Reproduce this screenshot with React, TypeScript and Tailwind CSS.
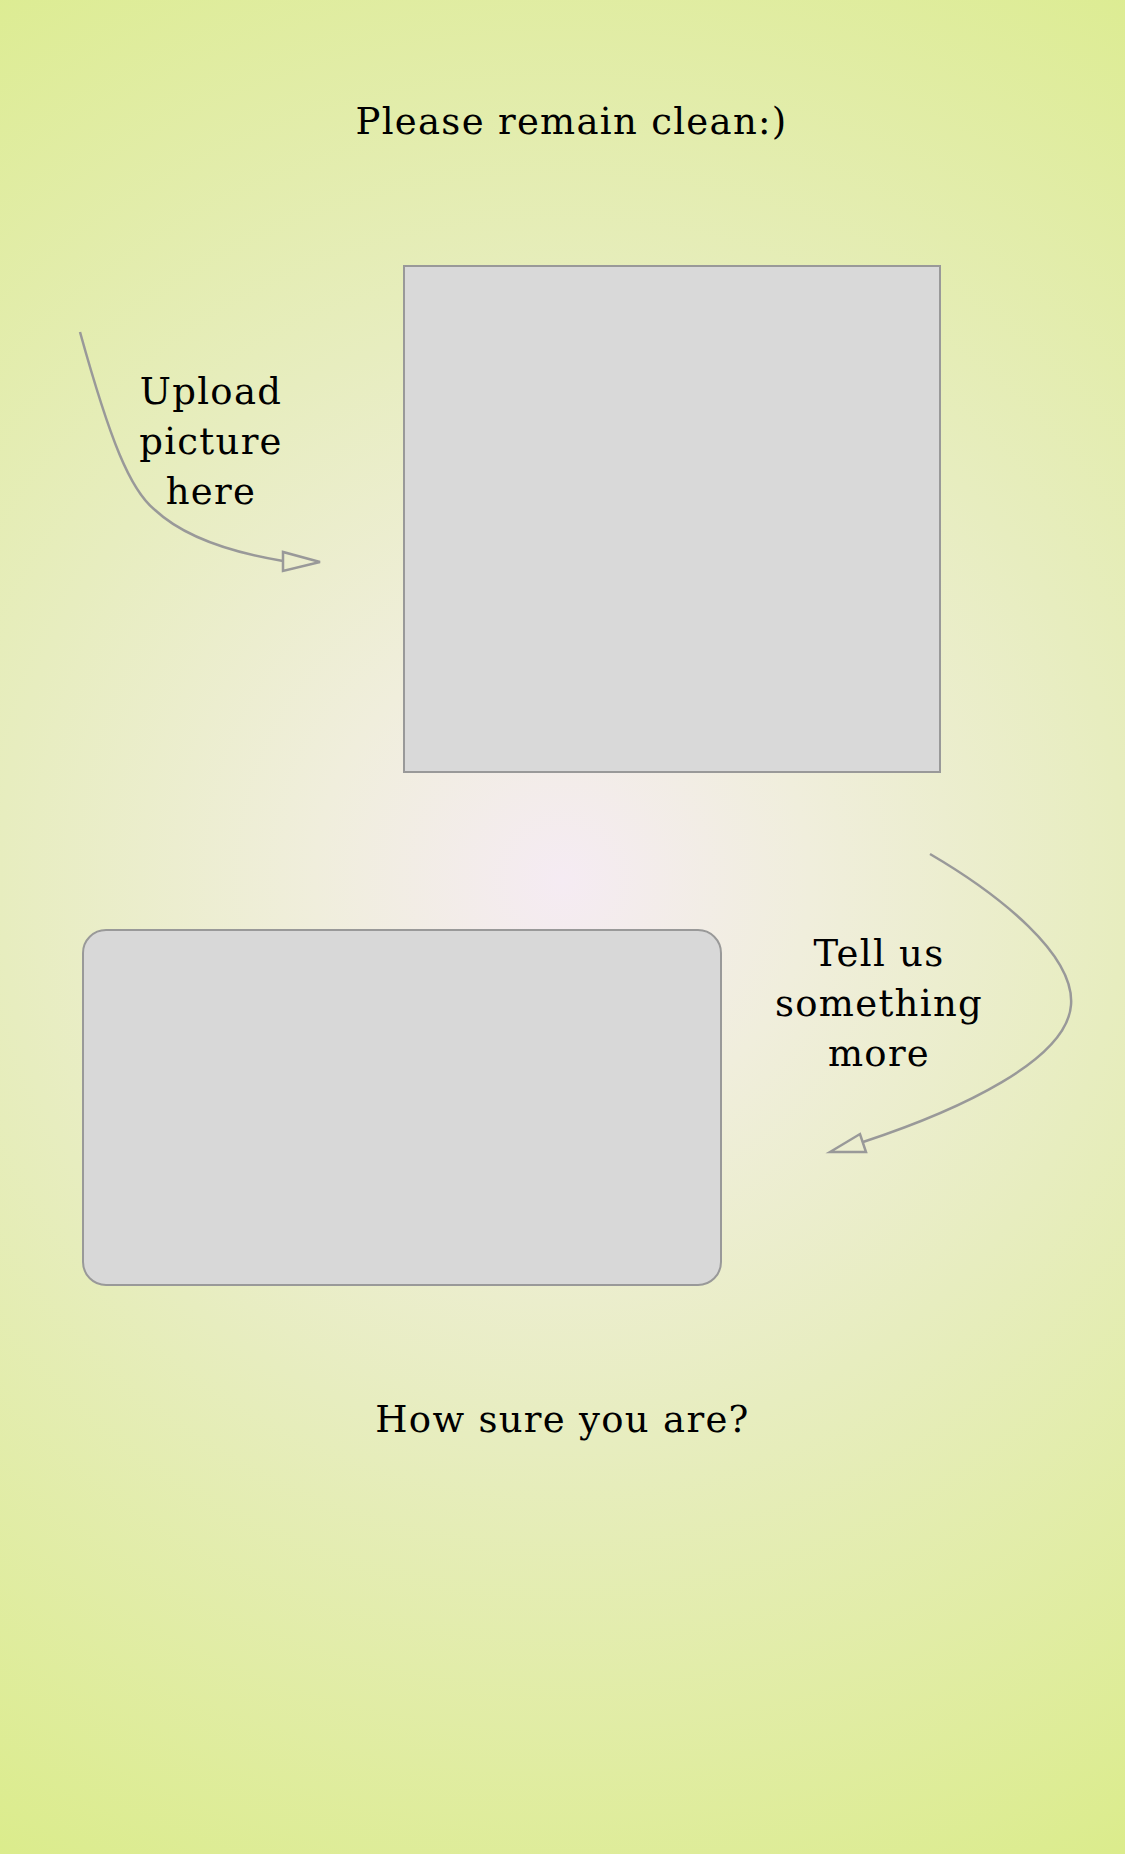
import React from 'react';

const Arrow = ({ d, head }: { d: string; head: string }) => (
  <>
    <path d={d} fill="none" stroke="#999999" strokeWidth={2.5} />
    <polygon points={head} fill="none" stroke="#999999" strokeWidth={2.5} strokeLinejoin="miter" />
  </>
);

const App = () => {
  return (
    <div
      className="w-[1125px] h-[1854px] flex flex-col text-black text-[37px] tracking-[1.3px] bg-[radial-gradient(circle_at_50%_47.5%,#f5ebf3_0%,#f0eedc_22%,#e7edbf_50%,#dbec8c_100%)]"
      style={{ fontFamily: '"DejaVu Serif", serif' }}
    >
      <h1 className="mt-[102px] h-[40px] pl-[18px] leading-[40px] text-center font-normal">Please remain clean:)</h1>

      <section className="mt-[123px] flex">
        <div className="relative w-[403px] h-[508px]">
          <svg className="absolute inset-0 w-[403px] h-[508px]" viewBox="0 265 403 508">
            <Arrow
              d="M80 332 C110 440 130 490 155 510 C185 538 235 553 283 561"
              head="283,552 283,571 320,562"
            />
          </svg>
          <p className="relative ml-[81px] w-[260px] pt-[102px] text-center leading-[50px]">
            Upload
            <br />
            picture
            <br />
            here
          </p>
        </div>
        <div className="w-[538px] h-[508px] border-2 border-[#999999] bg-[#d9d9d9]" />
      </section>

      <section className="mt-[156px] flex pl-[82px]">
        <div className="w-[640px] h-[357px] rounded-[24px] border-2 border-[#999999] bg-[#d8d8d8]" />
        <div className="relative w-[403px]">
          <svg className="absolute left-0 top-[-100px] w-[403px] h-[400px]" viewBox="722 829 403 400">
            <Arrow
              d="M930 854 C1000 895 1075 955 1071 1005 C1067 1060 960 1110 863 1142"
              head="830,1152 860,1134 866,1152"
            />
          </svg>
          <p className="relative w-[314px] text-center leading-[50px]">
            Tell us
            <br />
            something
            <br />
            more
          </p>
        </div>
      </section>

      <p className="mt-[114px] h-[40px] leading-[40px] text-center">How sure you are?</p>
    </div>
  );
};

export default App;
